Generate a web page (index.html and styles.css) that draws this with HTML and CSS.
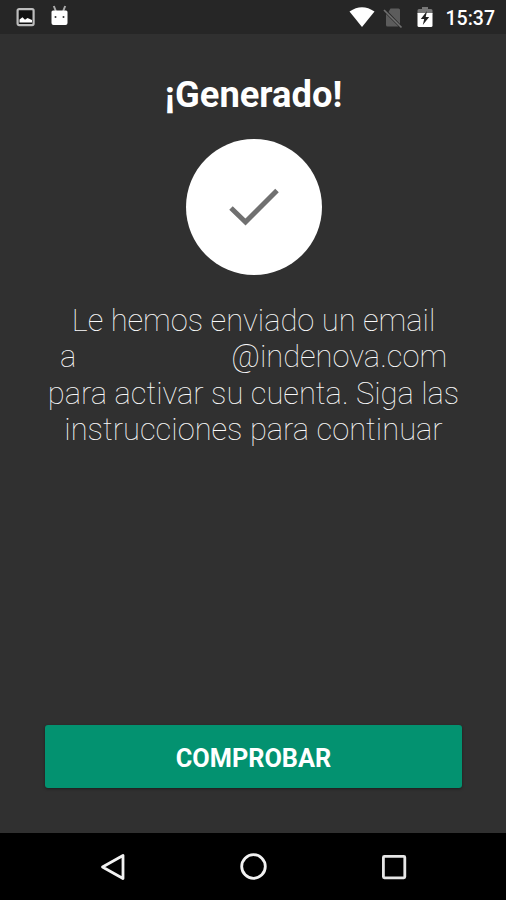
FILE: index.html
```html
<!DOCTYPE html>
<html lang="es">
<head>
    <meta charset="UTF-8">
    <meta name="viewport" content="width=device-width, initial-scale=1">
    <title>Generado</title>
    <link rel="stylesheet" href="styles.css">
</head>
<body>
    <header class="status-bar">
        <svg class="icon-image" width="20" height="20" viewBox="0 0 20 20">
            <rect x="1.6" y="2.1" width="16" height="16" rx="1.5" fill="#111" stroke="#bdbdbd" stroke-width="2.2"/>
            <path d="M3.5 15.5V12.5l3-2.3 2.5 2.5 2.5-1.8 4.5 2v2.6z" fill="#fff"/>
        </svg>
        <svg class="icon-robot" width="20" height="22" viewBox="0 0 20 22">
            <path d="M3.8 1l2 5M15.2 1l-2 5" stroke="#aaa" stroke-width="2"/>
            <path d="M1.5 7q0-1.5 1.5-1.5h13q1.5 0 1.5 1.5v11q0 2-2 2h-12q-2 0-2-2z" fill="#fff"/>
            <circle cx="5.5" cy="12" r="1" fill="#333"/>
            <circle cx="13.5" cy="12" r="1" fill="#333"/>
        </svg>
        <div class="status-right">
            <svg class="icon-wifi" width="26" height="21" viewBox="0 0 26 21">
                <path d="M.5 4.5Q13-4 25.5 4.5L13 20z" fill="#fff"/>
            </svg>
            <svg class="icon-sim" width="20" height="22" viewBox="0 0 20 22">
                <path d="M7.5 1.5H15.5q1.5 0 1.5 1.5v14L5.5 5z" fill="#5c5c5c"/>
                <path d="M3 7l12.5 12.5H4.5Q3 19.5 3 18z" fill="#5c5c5c"/>
                <path d="M1 3l17.5 17.5" stroke="#707070" stroke-width="1.7"/>
            </svg>
            <svg class="icon-battery" width="16" height="22" viewBox="0 0 16 22">
                <path d="M5 0h6v2h3q1.5 0 1.5 1.5V7H.5V3.5Q.5 2 2 2h3z" fill="#777"/>
                <path d="M.5 6h15v12.5q0 1.5-1.5 1.5H2q-1.5 0-1.5-1.5z" fill="#fff"/>
                <path d="M10 4L3.8 12H7.2L5.8 18 12.2 10H8.7z" fill="#222"/>
            </svg>
            <span class="clock">15:37</span>
        </div>
    </header>

    <main class="content">
        <h1 class="title">¡Generado!</h1>
        <div class="check-circle">
            <svg width="50" height="38" viewBox="0 0 50 38">
                <path d="M2 20l14.5 14L48 2.5" fill="none" stroke="#707070" stroke-width="5"/>
            </svg>
        </div>
        <p class="message">
            Le hemos enviado un email<br>
            a<span class="hidden-user"></span>@indenova.com<br>
            para activar su cuenta. Siga las<br>
            instrucciones para continuar
        </p>
        <button class="btn-check">COMPROBAR</button>
    </main>

    <nav class="nav-bar">
        <svg width="28" height="28" viewBox="0 0 28 28">
            <path d="M3.5 14L24 2.5v23z" fill="none" stroke="#f2f2f2" stroke-width="2.8" stroke-linejoin="round"/>
        </svg>
        <svg width="28" height="28" viewBox="0 0 28 28">
            <circle cx="13.5" cy="13.5" r="11.8" fill="none" stroke="#f2f2f2" stroke-width="2.8"/>
        </svg>
        <svg width="28" height="28" viewBox="0 0 28 28">
            <rect x="3.4" y="3.4" width="21.4" height="21.4" rx="1" fill="none" stroke="#e6e6e6" stroke-width="2.8"/>
        </svg>
    </nav>
</body>
</html>
```

FILE: styles.css
```css
* {
    box-sizing: border-box;
}

body {
    margin: 0;
    height: 900px;
    display: flex;
    flex-direction: column;
    background-color: #303030;
    color: #fff;
    font-family: Roboto, sans-serif;
    overflow: hidden;
}

.status-bar {
    height: 34px;
    flex: none;
    display: flex;
    align-items: flex-start;
    padding: 7px 11px 0 16px;
    background-color: #262626;
}

.icon-robot {
    margin: -2px 0 0 14px;
}

.status-right {
    margin-left: auto;
    display: flex;
}

.icon-sim {
    margin-left: 8px;
}

.icon-battery {
    margin-left: 14px;
}

.clock {
    margin-left: 13px;
    font-size: 19.5px;
    font-weight: 500;
    line-height: 24px;
}

.content {
    flex: 1;
    display: flex;
    flex-direction: column;
    align-items: center;
    padding: 39px 44px 45px 45px;
}

.title {
    margin: 0;
    font-size: 36.3px;
    font-weight: 700;
    line-height: 44px;
}

.check-circle {
    width: 136px;
    height: 136px;
    margin-top: 22px;
    display: flex;
    align-items: center;
    justify-content: center;
    border-radius: 50%;
    background-color: #fff;
}

.message {
    margin: 27.5px 0 0;
    color: #fff;
    font-size: 30.9px;
    font-weight: 100;
    line-height: 36.5px;
    text-align: center;
    white-space: nowrap;
    opacity: 0.98;
}

.hidden-user {
    display: inline-block;
    width: 155px;
}

.btn-check {
    width: 417px;
    height: 63px;
    margin-top: auto;
    padding: 3px 0 0;
    border: none;
    border-radius: 3px;
    background-color: #039270;
    box-shadow: 0 1px 3px rgba(0, 0, 0, 0.4);
    color: #fff;
    font-family: inherit;
    font-size: 25.3px;
    font-weight: 700;
}

.nav-bar {
    height: 67px;
    flex: none;
    display: flex;
    justify-content: space-between;
    align-items: center;
    padding: 0 98px 0 99px;
    background-color: #000;
}
```
